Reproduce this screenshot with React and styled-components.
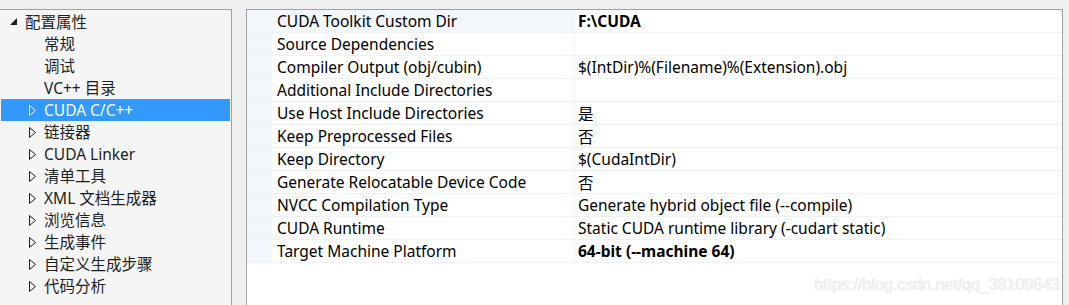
import React from "react"
import styled, { createGlobalStyle } from "styled-components"

const GlobalStyle = createGlobalStyle`
  html, body {
    margin: 0;
    padding: 0;
    background: #f0f0f0;
    overflow: hidden;
  }
  body {
    font-family: "Noto Sans", "Noto Sans CJK SC", sans-serif;
    font-size: 15.5px;
    color: #000;
  }
`

const tree = [
  { label: "配置属性", level: 0, state: "open" },
  { label: "常规", level: 1 },
  { label: "调试", level: 1 },
  { label: "VC++ 目录", level: 1 },
  { label: "CUDA C/C++", level: 1, state: "closed", selected: true },
  { label: "链接器", level: 1, state: "closed" },
  { label: "CUDA Linker", level: 1, state: "closed" },
  { label: "清单工具", level: 1, state: "closed" },
  { label: "XML 文档生成器", level: 1, state: "closed" },
  { label: "浏览信息", level: 1, state: "closed" },
  { label: "生成事件", level: 1, state: "closed" },
  { label: "自定义生成步骤", level: 1, state: "closed" },
  { label: "代码分析", level: 1, state: "closed" },
]

const props = [
  { name: "CUDA Toolkit Custom Dir", value: "F:\\CUDA", bold: true, current: true },
  { name: "Source Dependencies", value: "" },
  { name: "Compiler Output (obj/cubin)", value: "$(IntDir)%(Filename)%(Extension).obj" },
  { name: "Additional Include Directories", value: "" },
  { name: "Use Host Include Directories", value: "是" },
  { name: "Keep Preprocessed Files", value: "否" },
  { name: "Keep Directory", value: "$(CudaIntDir)" },
  { name: "Generate Relocatable Device Code", value: "否" },
  { name: "NVCC Compilation Type", value: "Generate hybrid object file (--compile)" },
  { name: "CUDA Runtime", value: "Static CUDA runtime library (-cudart static)" },
  { name: "Target Machine Platform", value: "64-bit (--machine 64)", bold: true },
]

const Expander = ({ state, selected }) => {
  if (state === "open") {
    return (
      <svg width="9" height="9" viewBox="0 0 9 9">
        <polygon points="8,0 8,7 1,7" fill="#1e1e1e" />
      </svg>
    )
  }
  if (state === "closed") {
    return (
      <svg width="8" height="11" viewBox="0 0 8 11">
        <polygon
          points="0.5,0.5 6.5,5.5 0.5,10.5"
          fill="none"
          stroke={selected ? "#fff" : "#1e1e1e"}
          strokeWidth="1"
        />
      </svg>
    )
  }
  return null
}

const App = () => (
  <>
    <GlobalStyle />
    <Window>
      <TreePanel>
        {tree.map(item => (
          <TreeRow key={item.label} selected={item.selected}>
            <ArrowSlot level={item.level}>
              <Expander state={item.state} selected={item.selected} />
            </ArrowSlot>
            <TreeLabel>{item.label}</TreeLabel>
          </TreeRow>
        ))}
      </TreePanel>
      <GridPanel>
        {props.map(p => (
          <PropRow key={p.name}>
            <Gutter />
            <NameCell current={p.current}>{p.name}</NameCell>
            <ValueCell bold={p.bold}>{p.value}</ValueCell>
          </PropRow>
        ))}
        <Watermark>https://blog.csdn.net/qq_38109843</Watermark>
      </GridPanel>
    </Window>
  </>
)

const Window = styled.div`
  display: flex;
  align-items: stretch;
  gap: 14px;
  padding-top: 9px;
  height: 296px;
`

const TreePanel = styled.div`
  width: 231px;
  flex: none;
  background: #f5f5f5;
  border-top: 1px solid #a0a0a0;
  border-right: 1px solid #a0a0a0;
  padding-top: 1px;
`

const TreeRow = styled.div`
  display: flex;
  align-items: center;
  height: 22px;
  margin-left: 1px;
  margin-right: 1px;
  background: ${p => (p.selected ? "#3399ff" : "transparent")};
  color: ${p => (p.selected ? "#fff" : "#1e1e1e")};
  white-space: nowrap;
`

const ArrowSlot = styled.span`
  display: flex;
  align-items: center;
  justify-content: flex-start;
  width: ${p => (p.level === 0 ? 16 : 15)}px;
  padding-left: ${p => (p.level === 0 ? 8 : 28)}px;
  svg {
    display: block;
    margin-top: ${p => (p.level === 0 ? 1 : 0)}px;
  }
`

const TreeLabel = styled.span`
  line-height: 22px;
`

const GridPanel = styled.div`
  position: relative;
  width: 815px;
  flex: none;
  background: #fff;
  border: 1px solid #a0a0a0;
  border-bottom: none;
`

const PropRow = styled.div`
  display: grid;
  grid-template-columns: 25px 303px 1fr;
  height: 23px;
  border-bottom: 1px solid #eef1f5;
  box-sizing: border-box;
`

const Gutter = styled.div`
  background: #f3f6fb;
`

const NameCell = styled.div`
  display: flex;
  align-items: center;
  padding-left: 5px;
  background: ${p => (p.current ? "#f3f6fb" : "#fff")};
  border-right: 1px solid #eef1f5;
  white-space: nowrap;
  overflow: hidden;
`

const ValueCell = styled.div`
  display: flex;
  align-items: center;
  padding-left: 3px;
  font-weight: ${p => (p.bold ? 700 : 400)};
  white-space: nowrap;
  overflow: hidden;
`

const Watermark = styled.div`
  position: absolute;
  right: 2px;
  top: 266px;
  font-family: "Liberation Sans", Arial, sans-serif;
  font-size: 16px;
  color: #f4f4f4;
  text-shadow: 0 0 1px #cfcfcf;
  pointer-events: none;
`

export default App
